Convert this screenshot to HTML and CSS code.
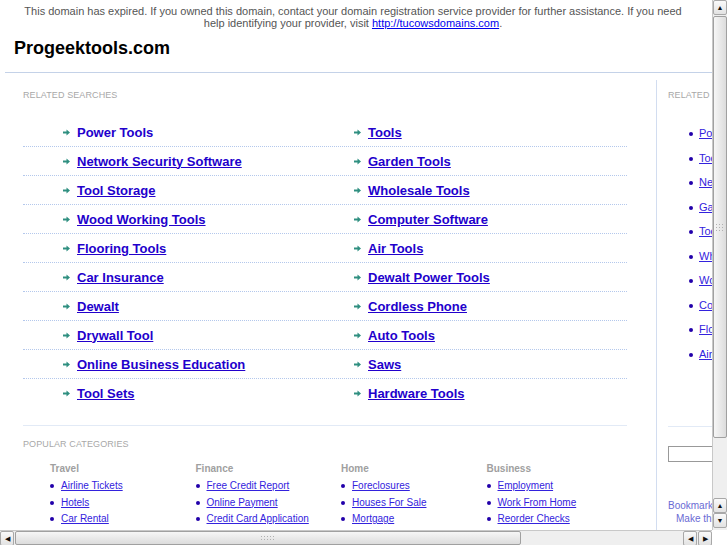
FILE: index.html
```html
<!DOCTYPE html>
<html lang="en">
<head>
    <meta charset="UTF-8">
    <meta name="viewport" content="width=device-width, initial-scale=1.0">
    <title>Progeektools.com</title>
    <link rel="stylesheet" href="styles.css">
</head>
<body>
    <div class="notice">
        This domain has expired. If you owned this domain, contact your domain registration service provider for further assistance. If you need help identifying your provider, visit <a href="#">http://tucowsdomains.com</a>.
    </div>
    <h1 class="site-title">Progeektools.com</h1>

    <div class="page">
        <div class="main">
            <h2 class="section-label">RELATED SEARCHES</h2>
            <div class="searches">
                <div class="search-row">
                    <a href="#" class="search-link hover"><svg width="7" height="7" viewBox="0 0 7 7"><path d="M0 2.5h3.5V0.5L7 3.5 3.5 6.5V4.5H0z"/></svg>Power Tools</a>
                    <a href="#" class="search-link"><svg width="7" height="7" viewBox="0 0 7 7"><path d="M0 2.5h3.5V0.5L7 3.5 3.5 6.5V4.5H0z"/></svg><span>Tools</span></a>
                </div>
                <div class="search-row">
                    <a href="#" class="search-link"><svg width="7" height="7" viewBox="0 0 7 7"><path d="M0 2.5h3.5V0.5L7 3.5 3.5 6.5V4.5H0z"/></svg><span>Network Security Software</span></a>
                    <a href="#" class="search-link"><svg width="7" height="7" viewBox="0 0 7 7"><path d="M0 2.5h3.5V0.5L7 3.5 3.5 6.5V4.5H0z"/></svg><span>Garden Tools</span></a>
                </div>
                <div class="search-row">
                    <a href="#" class="search-link"><svg width="7" height="7" viewBox="0 0 7 7"><path d="M0 2.5h3.5V0.5L7 3.5 3.5 6.5V4.5H0z"/></svg><span>Tool Storage</span></a>
                    <a href="#" class="search-link"><svg width="7" height="7" viewBox="0 0 7 7"><path d="M0 2.5h3.5V0.5L7 3.5 3.5 6.5V4.5H0z"/></svg><span>Wholesale Tools</span></a>
                </div>
                <div class="search-row">
                    <a href="#" class="search-link"><svg width="7" height="7" viewBox="0 0 7 7"><path d="M0 2.5h3.5V0.5L7 3.5 3.5 6.5V4.5H0z"/></svg><span>Wood Working Tools</span></a>
                    <a href="#" class="search-link"><svg width="7" height="7" viewBox="0 0 7 7"><path d="M0 2.5h3.5V0.5L7 3.5 3.5 6.5V4.5H0z"/></svg><span>Computer Software</span></a>
                </div>
                <div class="search-row">
                    <a href="#" class="search-link"><svg width="7" height="7" viewBox="0 0 7 7"><path d="M0 2.5h3.5V0.5L7 3.5 3.5 6.5V4.5H0z"/></svg><span>Flooring Tools</span></a>
                    <a href="#" class="search-link"><svg width="7" height="7" viewBox="0 0 7 7"><path d="M0 2.5h3.5V0.5L7 3.5 3.5 6.5V4.5H0z"/></svg><span>Air Tools</span></a>
                </div>
                <div class="search-row">
                    <a href="#" class="search-link"><svg width="7" height="7" viewBox="0 0 7 7"><path d="M0 2.5h3.5V0.5L7 3.5 3.5 6.5V4.5H0z"/></svg><span>Car Insurance</span></a>
                    <a href="#" class="search-link"><svg width="7" height="7" viewBox="0 0 7 7"><path d="M0 2.5h3.5V0.5L7 3.5 3.5 6.5V4.5H0z"/></svg><span>Dewalt Power Tools</span></a>
                </div>
                <div class="search-row">
                    <a href="#" class="search-link"><svg width="7" height="7" viewBox="0 0 7 7"><path d="M0 2.5h3.5V0.5L7 3.5 3.5 6.5V4.5H0z"/></svg><span>Dewalt</span></a>
                    <a href="#" class="search-link"><svg width="7" height="7" viewBox="0 0 7 7"><path d="M0 2.5h3.5V0.5L7 3.5 3.5 6.5V4.5H0z"/></svg><span>Cordless Phone</span></a>
                </div>
                <div class="search-row">
                    <a href="#" class="search-link"><svg width="7" height="7" viewBox="0 0 7 7"><path d="M0 2.5h3.5V0.5L7 3.5 3.5 6.5V4.5H0z"/></svg><span>Drywall Tool</span></a>
                    <a href="#" class="search-link"><svg width="7" height="7" viewBox="0 0 7 7"><path d="M0 2.5h3.5V0.5L7 3.5 3.5 6.5V4.5H0z"/></svg><span>Auto Tools</span></a>
                </div>
                <div class="search-row">
                    <a href="#" class="search-link"><svg width="7" height="7" viewBox="0 0 7 7"><path d="M0 2.5h3.5V0.5L7 3.5 3.5 6.5V4.5H0z"/></svg><span>Online Business Education</span></a>
                    <a href="#" class="search-link"><svg width="7" height="7" viewBox="0 0 7 7"><path d="M0 2.5h3.5V0.5L7 3.5 3.5 6.5V4.5H0z"/></svg><span>Saws</span></a>
                </div>
                <div class="search-row">
                    <a href="#" class="search-link"><svg width="7" height="7" viewBox="0 0 7 7"><path d="M0 2.5h3.5V0.5L7 3.5 3.5 6.5V4.5H0z"/></svg><span>Tool Sets</span></a>
                    <a href="#" class="search-link"><svg width="7" height="7" viewBox="0 0 7 7"><path d="M0 2.5h3.5V0.5L7 3.5 3.5 6.5V4.5H0z"/></svg><span>Hardware Tools</span></a>
                </div>
            </div>

            <h2 class="section-label popular-label">POPULAR CATEGORIES</h2>
            <div class="categories">
                <div class="category">
                    <h3>Travel</h3>
                    <ul>
                        <li><a href="#">Airline Tickets</a></li>
                        <li><a href="#">Hotels</a></li>
                        <li><a href="#">Car Rental</a></li>
                    </ul>
                </div>
                <div class="category">
                    <h3>Finance</h3>
                    <ul>
                        <li><a href="#">Free Credit Report</a></li>
                        <li><a href="#">Online Payment</a></li>
                        <li><a href="#">Credit Card Application</a></li>
                    </ul>
                </div>
                <div class="category">
                    <h3>Home</h3>
                    <ul>
                        <li><a href="#">Foreclosures</a></li>
                        <li><a href="#">Houses For Sale</a></li>
                        <li><a href="#">Mortgage</a></li>
                    </ul>
                </div>
                <div class="category">
                    <h3>Business</h3>
                    <ul>
                        <li><a href="#">Employment</a></li>
                        <li><a href="#">Work From Home</a></li>
                        <li><a href="#">Reorder Checks</a></li>
                    </ul>
                </div>
            </div>
        </div>

        <div class="sidebar">
            <h2 class="section-label">RELATED SEARCHES</h2>
            <ul class="side-list">
                <li><a href="#">Power Tools</a></li>
                <li><a href="#">Tools</a></li>
                <li><a href="#">Network Security Software</a></li>
                <li><a href="#">Garden Tools</a></li>
                <li><a href="#">Tool Storage</a></li>
                <li><a href="#">Wholesale Tools</a></li>
                <li><a href="#">Wood Working Tools</a></li>
                <li><a href="#">Computer Software</a></li>
                <li><a href="#">Flooring Tools</a></li>
                <li><a href="#">Air Tools</a></li>
            </ul>
            <input type="text" class="search-box">
            <p class="bookmark">Bookmark this page</p>
            <p class="homepage">Make this your homepage</p>
        </div>
    </div>

    <!-- fake browser scrollbars -->
    <div class="vscroll">
        <div class="sb-btn">&#9650;</div>
        <div class="v-thumb"><span class="grip"></span></div>
        <div class="v-end">
            <div class="sb-btn">&#9650;</div>
            <div class="sb-btn">&#9660;</div>
        </div>
    </div>
    <div class="hscroll">
        <div class="sb-btn">&#9664;</div>
        <div class="h-thumb"><span class="grip"></span></div>
        <div class="h-end">
            <div class="sb-btn">&#9664;</div>
            <div class="sb-btn">&#9654;</div>
        </div>
    </div>
    <div class="corner"></div>
</body>
</html>
```

FILE: styles.css
```css
body {
    margin: 0;
    font-family: "Liberation Sans", Arial, sans-serif;
    background: #fff;
    color: #333;
    overflow: hidden;
}

a {
    color: #2200cc;
}

.notice {
    width: 666px;
    margin-left: 20px;
    padding-top: 5px;
    text-align: center;
    font-size: 11px;
    line-height: 12px;
    color: #555;
}

.notice a {
    color: #0000ee;
}

.site-title {
    margin: 8px 0 0 14px;
    font-size: 18px;
    line-height: 22px;
    color: #000;
    padding-bottom: 13px;
}

.page {
    display: flex;
    width: 900px;
    margin-left: 5px;
    padding-top: 7px;
    border-top: 1px solid #c4d2e8;
}

.main {
    width: 604px;
    padding: 10px 0 0 18px;
    margin-right: 29px;
}

.section-label {
    margin: 0;
    font-size: 9px;
    line-height: 11px;
    font-weight: normal;
    color: #a8a8a8;
    letter-spacing: 0.1px;
}

.searches {
    margin-top: 17px;
    padding-bottom: 18px;
    border-bottom: 1px solid #e2eaf6;
}

.search-row {
    display: grid;
    grid-template-columns: 291px 1fr;
    padding-left: 40px;
    height: 28px;
    align-items: center;
    border-bottom: 1px dotted #b4c8ec;
}

.search-row:last-child {
    border-bottom: none;
}

.search-link {
    display: flex;
    align-items: center;
    font-size: 13px;
    font-weight: bold;
    color: #2200cc;
    text-decoration: none;
}

.search-link span {
    text-decoration: underline;
}

.search-link svg {
    fill: #2f8f80;
    margin-right: 7px;
    flex-shrink: 0;
}

.popular-label {
    margin-top: 13px;
}

.categories {
    display: grid;
    grid-template-columns: repeat(4, 145.5px);
    padding-left: 27px;
    margin-top: 13px;
}

.category h3 {
    margin: 0 0 3px;
    font-size: 10px;
    line-height: 12px;
    color: #a0a0a0;
}

.category ul,
.side-list {
    list-style: none;
    margin: 0;
    padding: 0;
}

.category li {
    font-size: 10px;
    line-height: 16.5px;
    white-space: nowrap;
}

.category li::before,
.side-list li::before {
    content: "";
    display: inline-block;
    width: 4px;
    height: 4px;
    border-radius: 50%;
    background: #2200aa;
    margin-right: 7px;
    vertical-align: middle;
}

.category a,
.side-list a {
    color: #3322dd;
}

.sidebar {
    width: 200px;
    padding: 10px 0 0 11px;
    border-left: 1px solid #d2ddf0;
    min-height: 480px;
}

.side-list {
    margin-top: 20px;
    padding-left: 21px;
    padding-bottom: 60px;
    border-bottom: 1px solid #e2eaf6;
}

.side-list li {
    font-size: 11px;
    line-height: 24.5px;
    white-space: nowrap;
}

.side-list li::before {
    margin-right: 6px;
}

.search-box {
    display: block;
    margin-top: 19px;
    width: 160px;
    height: 16px;
    box-sizing: border-box;
    border: 1px solid #999;
}

.bookmark,
.homepage {
    margin: 0;
    font-size: 10px;
    line-height: 13px;
    color: #6a6ad4;
}

.bookmark {
    margin-top: 37px;
}

.homepage {
    padding-left: 8px;
}

/* scrollbars */
.vscroll {
    position: fixed;
    top: 0;
    right: 0;
    width: 15px;
    height: 530px;
    background: #efefef;
    border-left: 1px solid #c8c8c8;
    box-sizing: border-box;
    display: flex;
    flex-direction: column;
}

.hscroll {
    position: fixed;
    left: 0;
    bottom: 0;
    width: 712px;
    height: 15px;
    background: #efefef;
    border-top: 1px solid #c8c8c8;
    box-sizing: border-box;
    display: flex;
}

.corner {
    position: fixed;
    right: 0;
    bottom: 0;
    width: 15px;
    height: 15px;
    background: #fff;
}

.sb-btn {
    width: 14px;
    height: 15px;
    box-sizing: border-box;
    border: 1px solid #a8a8a8;
    border-radius: 2px;
    background: linear-gradient(#fafafa, #e2e2e2);
    font-size: 7px;
    line-height: 13px;
    text-align: center;
    color: #111;
    flex-shrink: 0;
}

.v-thumb {
    margin-top: 1px;
    height: 420px;
    border: 1px solid #a0a0a0;
    border-radius: 2px;
    background: linear-gradient(90deg, #f6f6f6, #dcdcdc);
    display: flex;
    align-items: center;
    justify-content: center;
}

.v-end {
    margin-top: auto;
    margin-bottom: 2px;
}

.h-thumb {
    margin-left: 1px;
    width: 504px;
    border: 1px solid #a0a0a0;
    border-radius: 2px;
    background: linear-gradient(#f6f6f6, #dcdcdc);
    display: flex;
    align-items: center;
    justify-content: center;
}

.h-end {
    margin-left: auto;
    display: flex;
    gap: 1px;
}

.grip {
    width: 10px;
    height: 8px;
    background-image: radial-gradient(#b0b0b0 0.8px, transparent 1px);
    background-size: 3px 3px;
}

.h-thumb .grip {
    width: 16px;
    height: 7px;
}
```
